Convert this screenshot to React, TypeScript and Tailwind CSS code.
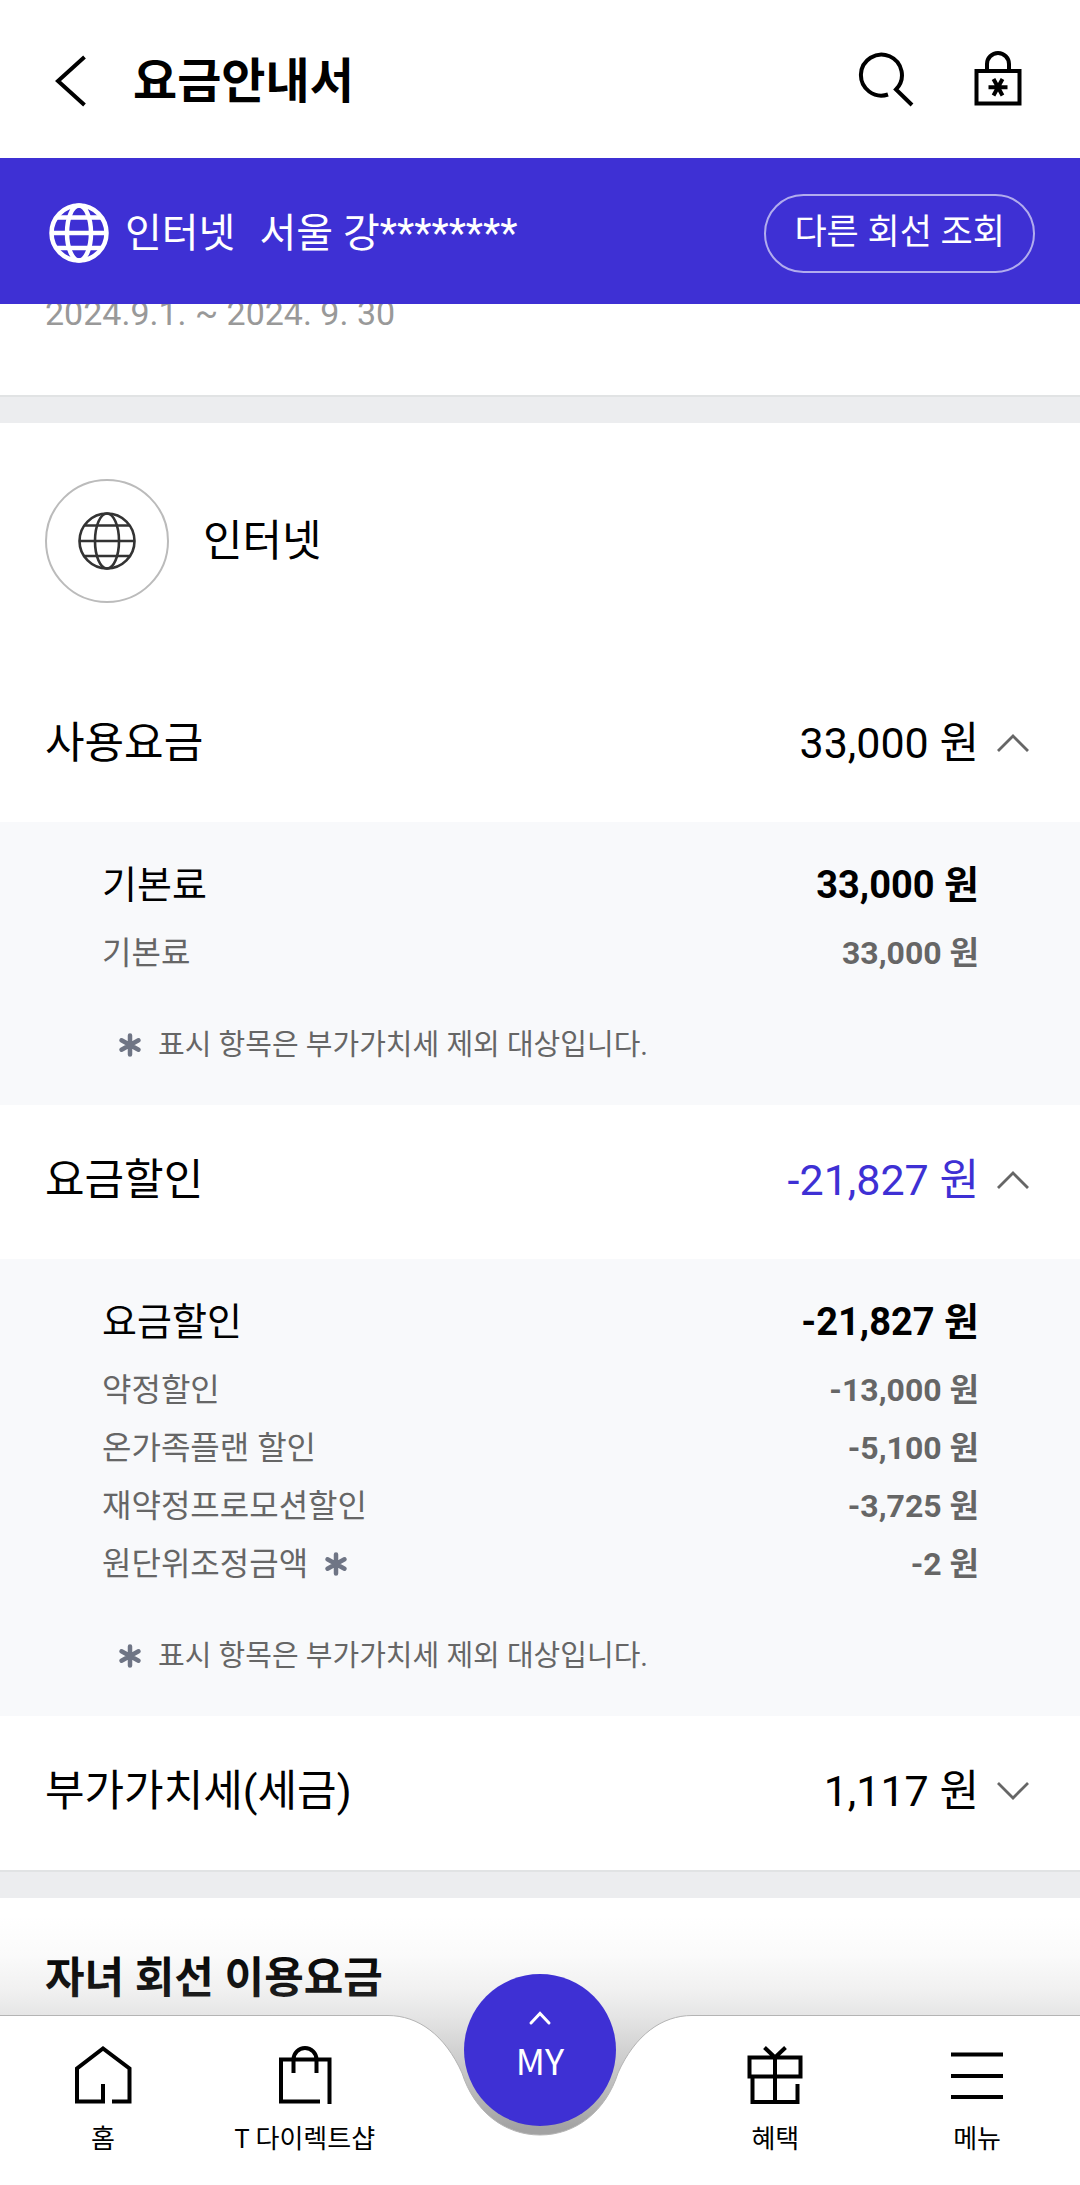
import React, { useState } from 'react';

interface FeeItem {
  label: string;
  amount: string;
  taxExempt?: boolean;
}

interface FeeGroup {
  id: string;
  title: string;
  total: string;
  discount?: boolean;
  items: FeeItem[];
}

const feeGroups: FeeGroup[] = [
  {
    id: 'usage',
    title: '사용요금',
    total: '33,000 원',
    items: [
      { label: '기본료', amount: '33,000 원' },
      { label: '기본료', amount: '33,000 원' },
    ],
  },
  {
    id: 'discount',
    title: '요금할인',
    total: '-21,827 원',
    discount: true,
    items: [
      { label: '요금할인', amount: '-21,827 원' },
      { label: '약정할인', amount: '-13,000 원' },
      { label: '온가족플랜 할인', amount: '-5,100 원' },
      { label: '재약정프로모션할인', amount: '-3,725 원' },
      { label: '원단위조정금액', amount: '-2 원', taxExempt: true },
    ],
  },
  {
    id: 'vat',
    title: '부가가치세(세금)',
    total: '1,117 원',
    items: [{ label: '부가가치세(세금)', amount: '1,117 원' }],
  },
];

const GlobeIcon: React.FC<{ className: string; strokeWidth: number }> = ({ className, strokeWidth }) => (
  <svg className={className} viewBox="0 0 60 60" fill="none" stroke="currentColor" strokeWidth={strokeWidth} aria-hidden="true">
    <circle cx="30" cy="30" r="27.5" />
    <ellipse cx="30" cy="30" rx="12" ry="27.5" />
    <path d="M3 30h54M7 14.5h46M7 45h46" />
  </svg>
);

const AsteriskIcon: React.FC = () => (
  <svg className="w-6 h-6 text-[#6f7585]" viewBox="0 0 24 24" fill="none" stroke="currentColor" strokeWidth="4.5" strokeLinecap="round" aria-hidden="true">
    <path d="M12 2.5v19M3.5 7.3l17 9.4M20.5 7.3l-17 9.4" />
  </svg>
);

const Chevron: React.FC<{ open: boolean }> = ({ open }) => (
  <svg className="w-8 h-5 text-[#666]" viewBox="0 0 32 20" fill="none" stroke="currentColor" strokeWidth="2.8" aria-hidden="true">
    <path d={open ? 'M1 18L16 3l15 15' : 'M1 2l15 15L31 2'} />
  </svg>
);

const FeeSection: React.FC<{ group: FeeGroup; open: boolean; onToggle: () => void }> = ({ group, open, onToggle }) => (
  <section>
    <h3>
      <button
        type="button"
        aria-expanded={open}
        onClick={onToggle}
        className="flex w-full items-center justify-between pl-[45px] pr-[51px] pb-1 h-[154px] text-[43px] leading-[60px]"
      >
        <span>{group.title}</span>
        <span className="flex items-center gap-[18px]">
          <span className={group.discount ? 'text-[#3e30d4]' : 'text-black'}>{group.total}</span>
          <Chevron open={open} />
        </span>
      </button>
    </h3>
    {open && (
      <div className="bg-[#f8f9fb] pl-[102px] pr-[101px] pt-[35px] pb-[38px]">
        <table className="w-full">
          <tbody>
            {group.items.map((item, i) => (
              <tr key={i} className={i === 0 ? 'h-[67px] align-top text-[38px] leading-[56px]' : 'h-[58px] text-[32px] leading-[58px] text-[#666]'}>
                <th scope="row" className="text-left font-normal">
                  <span className="flex items-center gap-4">
                    {item.label}
                    {item.taxExempt && <AsteriskIcon />}
                  </span>
                </th>
                <td className="text-right font-bold">{item.amount}</td>
              </tr>
            ))}
          </tbody>
        </table>
        <p className="flex items-center gap-4 mt-[41px] pl-4 text-[29px] leading-[44px] text-[#666]">
          <AsteriskIcon />
          표시 항목은 부가가치세 제외 대상입니다.
        </p>
      </div>
    )}
  </section>
);

const NavItem: React.FC<{ label: string; children: React.ReactNode }> = ({ label, children }) => (
  <a href="#" className="flex flex-col items-center gap-1 pt-[30px] text-[26px] leading-[56px]">
    <svg className="w-[60px] h-[60px]" viewBox="0 0 60 60" fill="none" stroke="currentColor" strokeWidth="4" aria-hidden="true">
      {children}
    </svg>
    <span>{label}</span>
  </a>
);

const BottomNav: React.FC = () => (
  <nav className="sticky bottom-0 mt-auto h-[170px] font-['Noto_Sans_CJK_KR',sans-serif]">
    {/* Shadow rising from the bar */}
    <div className="pointer-events-none absolute inset-x-0 -top-[100px] h-[225px] bg-[linear-gradient(rgba(162,162,162,0),rgba(162,162,162,0.05)_18%,rgba(162,162,162,0.15)_33%,rgba(162,162,162,0.28)_45%,rgba(162,162,162,0.62)_70%,rgba(162,162,162,1)_95%)]" />

    {/* Bar with the notch for the MY button */}
    <div className="absolute inset-0 flex">
      <div className="flex-1 border-t border-[#b4b4b4] bg-white" />
      <svg className="w-[312px] h-[170px]" viewBox="0 0 312 170" aria-hidden="true">
        <path d="M0 .5H4C34 .5 61 20 78 58C90 96 120 120 156 120C192 120 222 96 234 58C251 20 278 .5 308 .5H312V170H0Z" fill="#fff" />
        <path d="M0 .5H4C34 .5 61 20 78 58C90 96 120 120 156 120C192 120 222 96 234 58C251 20 278 .5 308 .5H312" fill="none" stroke="#b4b4b4" />
      </svg>
      <div className="flex-1 border-t border-[#b4b4b4] bg-white" />
    </div>

    <div className="relative grid grid-cols-[3fr_3fr_4fr_3fr_3fr] px-0.5">
      <NavItem label="홈">
        <path d="M39 56.500H56.500V23.500L30 3.500L4 23.500V56.500H30V39" />
      </NavItem>
      <NavItem label="T 다이렉트샵">
        <path d="M45 56.500H6V14.500H54.500V59M18.500 28V14.500a11.500 11.500 0 0 1 23 0V28" />
      </NavItem>
      <div className="flex justify-center">
        <button type="button" className="-mt-[41px] flex h-[152px] w-[152px] flex-col items-center rounded-full bg-[#3e30d4] pt-9 text-[36px] leading-[66px] text-white">
          <svg className="w-6 h-4" viewBox="0 0 24 16" fill="none" stroke="currentColor" strokeWidth="3" strokeLinecap="round" aria-hidden="true">
            <path d="M3 13l9-9.500 9 9.500" />
          </svg>
          MY
        </button>
      </div>
      <NavItem label="혜택">
        <path d="M4.500 12.500H55.500V31.500H4.500ZM7.500 31.500V57H52.500V39M30 12.500V57M19.500 2.500L30 12.500L40.500 2.500" />
      </NavItem>
      <NavItem label="메뉴">
        <path d="M4 9.500H56M4 31H56M4 52H56" />
      </NavItem>
    </div>
  </nav>
);

const App: React.FC = () => {
  const [openGroups, setOpenGroups] = useState<string[]>(['usage', 'discount']);

  const toggleGroup = (id: string) => {
    setOpenGroups(prev => (prev.includes(id) ? prev.filter(g => g !== id) : [...prev, id]));
  };

  return (
    <div className="flex min-h-screen flex-col bg-white text-black font-['Roboto','Noto_Sans_CJK_KR',sans-serif]">
      <div className="sticky top-0 z-10">
        <header className="flex h-[158px] items-center bg-white pl-[54px] pr-[58px]">
          <button type="button" aria-label="뒤로" className="mr-[47px] pt-1">
            <svg className="w-8 h-[52px]" viewBox="0 0 32 52" fill="none" stroke="currentColor" strokeWidth="4">
              <path d="M30.500 2L4 26L30.500 50" />
            </svg>
          </button>
          <h1 className="pt-1.5 text-[48px] leading-[64px] font-bold">요금안내서</h1>
          <div className="ml-auto flex items-center gap-[60px]">
            <button type="button" aria-label="검색">
              <svg className="w-14 h-14" viewBox="0 0 56 56" fill="none" stroke="currentColor" strokeWidth="4">
                <path d="M30 43.500A20.500 20.500 0 1 1 38 38.500L54 54" />
              </svg>
            </button>
            <button type="button" aria-label="잠금">
              <svg className="w-12 h-14" viewBox="0 0 48 56" fill="none" stroke="currentColor" strokeWidth="4">
                <path d="M2.500 20H45.500V52.500H2.500ZM13 20V13a11 11 0 0 1 22 0V20" />
                <path d="M14.500 36.300H33.500M19.500 28L28.500 44.500M28.500 28L19.500 44.500" />
              </svg>
            </button>
          </div>
        </header>
        <div className="flex h-[146px] items-center bg-[#3e30d4] pl-[49px] pr-[45px] pt-1 text-[40px] leading-[60px] text-white">
          <GlobeIcon className="w-[60px] h-[60px] mr-4" strokeWidth={4.5} />
          <span className="mr-6 pt-0.5">인터넷</span>
          <span className="pt-0.5">서울 강********</span>
          <button type="button" className="ml-auto h-[79px] rounded-full border-2 border-white/60 px-7 text-[35px] leading-[52px]">
            다른 회선 조회
          </button>
        </div>
      </div>

      <main>
        {/* Billing period, partly scrolled under the line banner */}
        <p className="-mt-[10px] h-[101px] px-[45px] text-[34px] leading-[38px] text-[#999]">2024.9.1. ~ 2024. 9. 30</p>
        <div className="h-7 border-t-2 border-[#e1e3e4] bg-[#ecedef]" />

        <h2 className="flex items-center gap-[34px] px-[45px] pt-14 pb-[65px] text-[43px] leading-[60px]">
          <span className="flex h-[124px] w-[124px] items-center justify-center rounded-full border-2 border-[#bbb] text-[#333]">
            <GlobeIcon className="w-[60px] h-[60px]" strokeWidth={2.6} />
          </span>
          인터넷
        </h2>

        {feeGroups.map(group => (
          <FeeSection
            key={group.id}
            group={group}
            open={openGroups.includes(group.id)}
            onToggle={() => toggleGroup(group.id)}
          />
        ))}

        <div className="h-7 border-t-2 border-[#e1e3e4] bg-[#ecedef]" />
        <h2 className="px-[45px] pt-[50px] text-[43px] leading-[60px] font-bold">자녀 회선 이용요금</h2>
      </main>

      <BottomNav />
    </div>
  );
};

export default App;
